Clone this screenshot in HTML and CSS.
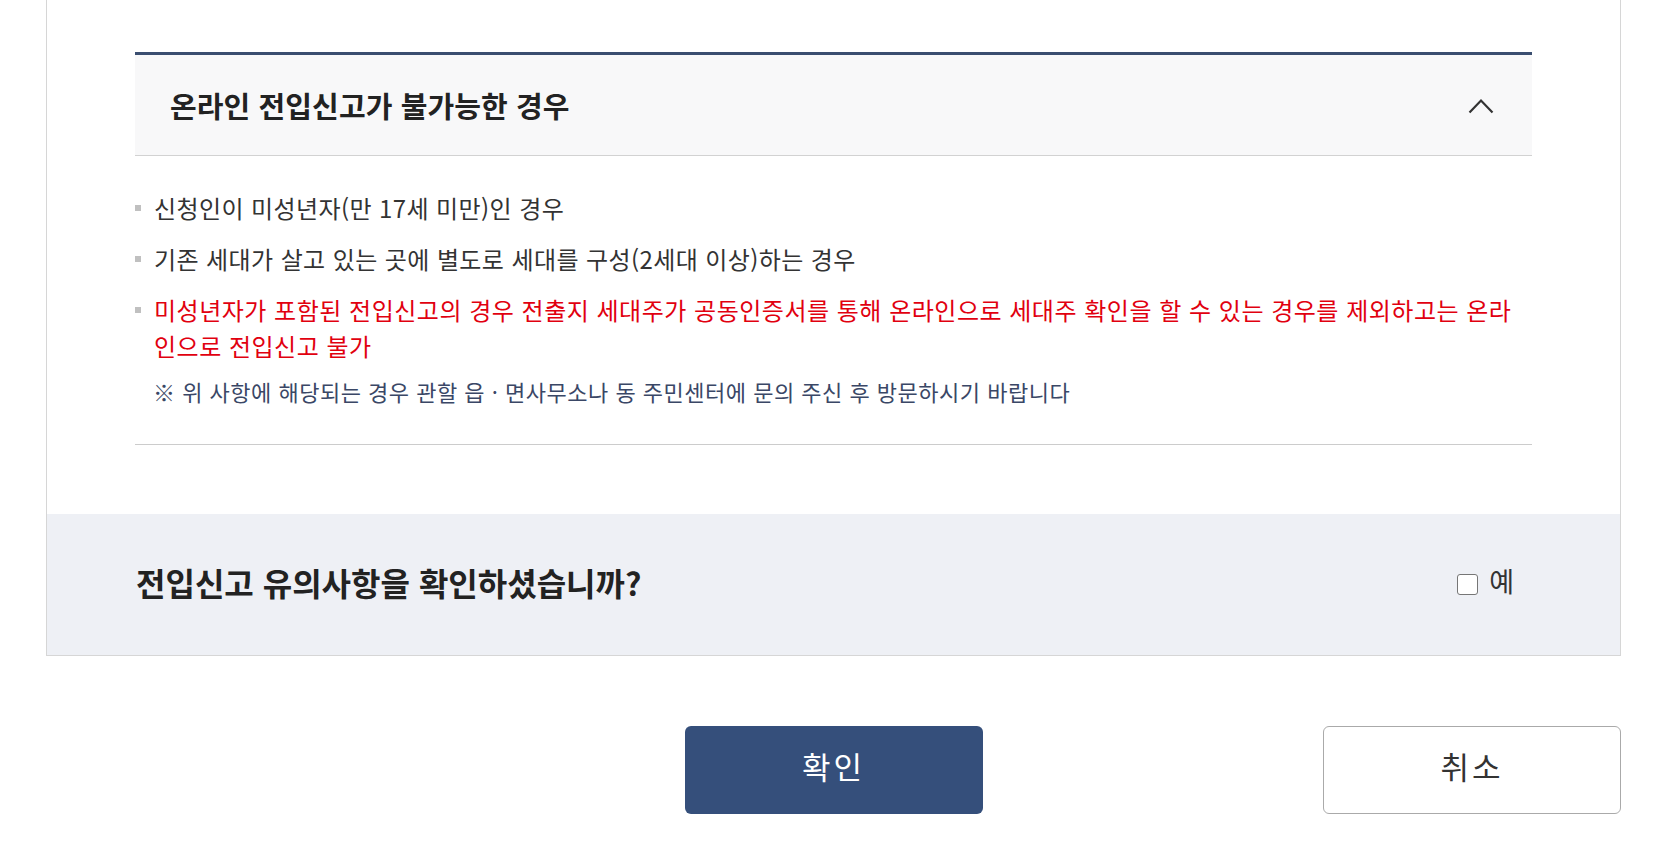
FILE: index.html
```html
<!DOCTYPE html>
<html lang="ko">
<head>
<meta charset="utf-8">
<title>전입신고</title>
<link rel="stylesheet" href="styles.css">
</head>
<body>
<div class="panel">
  <section class="accordion">
    <div class="acc-head">
      <h3 class="acc-title">온라인 전입신고가 불가능한 경우</h3>
      <svg class="chev" width="26" height="16" viewBox="0 0 26 16"><path d="M1.5 14.5 L13 2.5 L24.5 14.5" fill="none" stroke="#333" stroke-width="2.2"/></svg>
    </div>
    <div class="acc-body">
      <ul class="list">
        <li>신청인이 미성년자(만 17세 미만)인 경우</li>
        <li>기존 세대가 살고 있는 곳에 별도로 세대를 구성(2세대 이상)하는 경우</li>
        <li class="red">미성년자가 포함된 전입신고의 경우 전출지 세대주가 공동인증서를 통해 온라인으로 세대주 확인을 할 수 있는 경우를 제외하고는 온라인으로 전입신고 불가</li>
      </ul>
      <p class="note">※ 위 사항에 해당되는 경우 관할 읍 · 면사무소나 동 주민센터에 문의 주신 후 방문하시기 바랍니다</p>
    </div>
  </section>
  <div class="confirm">
    <p class="question">전입신고 유의사항을 확인하셨습니까?</p>
    <label class="check"><input type="checkbox" class="box"><span>예</span></label>
  </div>
</div>
<div class="buttons">
  <button class="btn primary">확인</button>
  <button class="btn secondary">취소</button>
</div>
</body>
</html>
```

FILE: styles.css
```css
* { box-sizing: border-box; }
body {
  margin: 0;
  background: #fff;
  font-family: "Noto Sans CJK KR", "Noto Sans", sans-serif;
  color: #333;
}
.panel {
  margin-left: 46px;
  width: 1575px;
  border: 1px solid #d6d6d6;
  border-top: none;
  padding-top: 52px;
}
.accordion {
  margin: 0 88px 69px;
  border-top: 3px solid #3a4e70;
}
.acc-head {
  height: 101px;
  background: #f8f8f9;
  border-bottom: 1px solid #d2d2d2;
  display: flex;
  align-items: center;
  justify-content: space-between;
  padding: 0 38px 0 35px;
}
.acc-title {
  margin: 0;
  font-size: 29px;
  font-weight: 700;
  color: #222;
  letter-spacing: 0.1px;
}
.chev { display: block; margin-top: 2px; }
.acc-body {
  padding: 34px 0 38px;
  border-bottom: 1px solid #cccccc;
}
.list {
  list-style: none;
  margin: 0;
  padding: 0;
}
.list li {
  position: relative;
  padding-left: 19px;
  font-size: 24px;
  letter-spacing: 0.4px;
  line-height: 36px;
  color: #333;
  margin-bottom: 15px;
}
.list li::before {
  content: "";
  position: absolute;
  left: 0;
  top: 15px;
  width: 6px;
  height: 6px;
  background: #c0c0c0;
}
.list li.red { color: #e1000f; margin-bottom: 12px; letter-spacing: 0.5px; }
.note {
  margin: 0;
  padding-left: 18px;
  font-size: 22px;
  letter-spacing: 0.5px;
  line-height: 30px;
  color: #3a4766;
}
.confirm {
  height: 141px;
  background: #eef0f5;
  display: flex;
  align-items: center;
  justify-content: space-between;
  padding: 0 106px 5px 89px;
}
.question {
  margin: 0;
  font-size: 32px;
  font-weight: 700;
  color: #222;
  letter-spacing: 0;
}
.check {
  display: flex;
  align-items: center;
  gap: 11px;
  font-size: 27px;
  color: #333;
}
.check span { margin-top: -3px; }
.box {
  appearance: none;
  -webkit-appearance: none;
  margin: 4px 0 0;
  width: 21px;
  height: 21px;
  border: 1px solid #767676;
  border-radius: 3px;
  background: #fff;
}
.buttons {
  margin: 70px 0 0 46px;
  width: 1575px;
  display: grid;
  grid-template-columns: 1fr auto 1fr;
}
.btn {
  height: 88px;
  padding: 0 0 9px;
  font-family: "Noto Sans CJK KR", "Noto Sans", sans-serif;
  font-size: 31px;
  letter-spacing: 3px;
  border-radius: 6px;
  cursor: pointer;
}
.primary {
  grid-column: 2;
  width: 298px;
  background: #354f7b;
  color: #fff;
  border: none;
}
.secondary {
  grid-column: 3;
  justify-self: end;
  width: 298px;
  background: #fff;
  color: #333;
  border: 1px solid #aaaaaa;
}
```
